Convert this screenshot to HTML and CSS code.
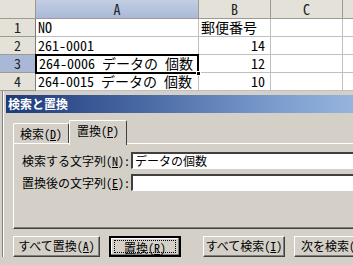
FILE: index.html
```html
<!doctype html>
<html lang="ja">
<head>
	<meta charset="UTF-8">
	<title>検索と置換</title>
	<link rel="stylesheet" href="styles.css">
</head>
<body>
<div class="sheet">
	<div class="hd corner"></div>
	<div class="hd col sel">A</div>
	<div class="hd col">B</div>
	<div class="hd col">C</div>
	<div class="hd col"></div>

	<div class="hd row">1</div>
	<div class="cell">NO</div>
	<div class="cell">郵便番号</div>
	<div class="cell"></div>
	<div class="cell"></div>

	<div class="hd row">2</div>
	<div class="cell">261-0001</div>
	<div class="cell num">14</div>
	<div class="cell"></div>
	<div class="cell"></div>

	<div class="hd row sel">3</div>
	<div class="cell active">264-0006 データの 個数<span class="handle"></span></div>
	<div class="cell num">12</div>
	<div class="cell"></div>
	<div class="cell"></div>

	<div class="hd row">4</div>
	<div class="cell">264-0015 データの 個数</div>
	<div class="cell num">10</div>
	<div class="cell"></div>
	<div class="cell"></div>
</div>

<div class="dialog">
	<div class="titlebar">検索と置換</div>
	<div class="tabs">
		<div class="tab">検索(<u>D</u>)</div>
		<div class="tab on">置換(<u>P</u>)</div>
	</div>
	<div class="panel">
		<div class="field">
			<label>検索する文字列(<u>N</u>):</label>
			<div class="input">データの個数</div>
		</div>
		<div class="field">
			<label>置換後の文字列(<u>E</u>):</label>
			<div class="input"></div>
		</div>
	</div>
	<div class="buttons">
		<div class="btn w1">すべて置換(<u>A</u>)</div>
		<div class="btn w2 default"><span class="focus">置換(<u>R</u>)</span></div>
		<div class="btn w3">すべて検索(<u>I</u>)</div>
		<div class="btn w4">次を検索(<u>F</u>)</div>
	</div>
</div>
</body>
</html>
```

FILE: styles.css
```css
*{
	margin:0;
	padding:0;
	box-sizing:border-box;
}
body{
	width:353px;
	height:265px;
	overflow:hidden;
	background:#d4d0c8;
	font-family:"Noto Sans CJK JP","Liberation Sans",sans-serif;
	font-feature-settings:"hwid";
	font-size:12px;
	color:#000;
}
.sheet{
	display:grid;
	grid-template-columns:36px 163px 72px 72px 60px;
	grid-template-rows:19px repeat(4,18px);
	background:#fff;
	width:403px;
}
.cell{
	position:relative;
	border-right:1px solid #c0c0c0;
	border-bottom:1px solid #c0c0c0;
	font-size:14px;
	line-height:17px;
	padding-left:2px;
	white-space:nowrap;
}
.num{
	text-align:right;
	padding-right:5px;
}
.active{
	border:2px solid #000;
	margin:-1px 0 -1px -1px;
	line-height:15px;
	z-index:1;
}
.handle{
	position:absolute;
	right:-4px;
	bottom:-4px;
	width:5px;
	height:5px;
	background:#000;
	border:1px solid #fff;
}
.hd{
	background:#e4e1d9;
	border-right:1px solid #9d9a92;
	border-bottom:1px solid #9d9a92;
	text-align:center;
	font-size:14px;
	color:#222;
}
.col{
	line-height:18px;
}
.row{
	line-height:17px;
	border-right-color:#7e7b74;
}
.col.sel{
	background:linear-gradient(#c3cee3,#a9b9d8);
}
.row.sel{
	background:#a9b8d6;
}
.dialog{
	margin-left:3px;
	border-top:1px solid #d4d0c8;
	border-left:1px solid #fff;
	padding:3px 0 0 2px;
	box-shadow:-1px 0 0 #808080;
}
.titlebar{
	height:18px;
	background:linear-gradient(90deg,#1d3a7a,#4a6aa4 40%,#7e9fcf 80%,#96b4dc);
	color:#fff;
	font-weight:bold;
	font-size:12px;
	line-height:18px;
	padding-left:2px;
}
.tabs{
	display:flex;
	align-items:flex-end;
	margin:5px 0 0 7px;
	height:25px;
}
.tab{
	height:20px;
	line-height:19px;
	border-top:1px solid #fff;
	border-left:1px solid #fff;
	border-right:1px solid #404040;
	border-top-left-radius:2px;
	border-top-right-radius:2px;
	width:56px;
	text-align:center;
	white-space:nowrap;
}
.tab.on{
	height:25px;
	width:58px;
	line-height:20px;
	margin-bottom:-2px;
	background:#d4d0c8;
	position:relative;
	z-index:1;
}
.panel{
	margin-left:7px;
	height:86px;
	border-top:1px solid #fff;
	border-left:1px solid #fff;
	border-bottom:1px solid #404040;
	box-shadow:0 -1px 0 #808080 inset;
	padding:8px 0 0 8px;
	display:flex;
	flex-direction:column;
	gap:5px;
}
.field{
	display:flex;
	align-items:center;
	height:17px;
}
.field label{
	width:109px;
	white-space:nowrap;
}
.input{
	flex:1;
	height:17px;
	background:#fff;
	border-top:2px solid #404040;
	border-left:2px solid #404040;
	border-bottom:1px solid #fff;
	line-height:14px;
	padding-left:2px;
	font-size:12px;
}
.buttons{
	display:flex;
	margin:7px 0 0 7px;
	gap:9px;
}
.btn{
	height:21px;
	border:1px solid;
	border-color:#fff #404040 #404040 #fff;
	box-shadow:-1px -1px 0 #808080 inset;
	text-align:center;
	line-height:18px;
	white-space:nowrap;
	flex:none;
}
.w1{width:87px;}
.w2{width:72px;}
.w3{width:82px;margin-left:13px;}
.w4{width:80px;}
.default{
	border:2px solid #000;
	box-shadow:-1px -1px 0 #808080 inset,1px 1px 0 #fff inset;
	padding:2px;
	line-height:13px;
}
.focus{
	display:block;
	height:13px;
	border:1px dotted #000;
	margin:0 1px;
}
```
